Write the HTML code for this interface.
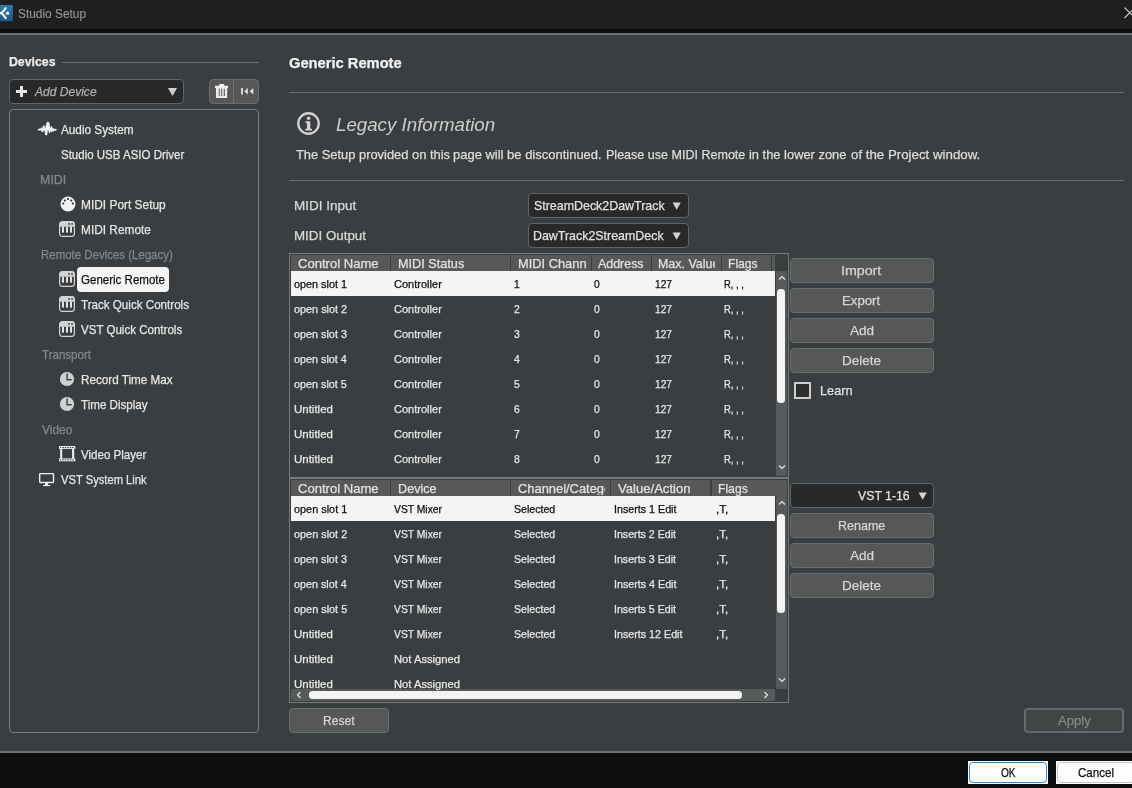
<!DOCTYPE html>
<html><head><meta charset="utf-8"><title>Studio Setup</title>
<style>
html,body{margin:0;padding:0;overflow:hidden;}
body{width:1132px;height:788px;position:relative;overflow:hidden;background:#3b3e40;font-family:"Liberation Sans", sans-serif;}
.b{position:absolute;box-sizing:border-box;}
.t{position:absolute;white-space:nowrap;display:block;transform-origin:0 0;-webkit-text-stroke:0.25px;}
#tx{position:absolute;left:0;top:0;width:1132px;height:788px;will-change:transform;}
svg{position:absolute;overflow:visible;}
#root{position:absolute;left:0;top:0;width:1132px;height:788px;overflow:hidden;}
</style></head><body><div id="root">
<div class="b" style="left:0px;top:0px;width:1132px;height:29px;background:#1f1f1f;"></div>
<div class="b" style="left:0px;top:29px;width:1132px;height:4px;background:#0c0e0d;"></div>
<div class="b" style="left:0px;top:33px;width:1132px;height:2px;background:#6e7172;"></div>
<svg style="left:0;top:4.75px" width="13" height="16.2" viewBox="0 0 13 16.2"><defs><linearGradient id="ig" x1="0" y1="0" x2="0" y2="1"><stop offset="0" stop-color="#2e7bb6"/><stop offset="1" stop-color="#1d5888"/></linearGradient></defs><rect x="0" y="0" width="12.9" height="16.2" fill="url(#ig)"/><path d="M-0.5 8.15 H1.6 M1.2 8.15 Q4.2 6.2 6.1 2.6 M1.2 8.15 Q4.2 10.1 6.1 13.7" stroke="#f4f8fc" stroke-width="2.2" fill="none" stroke-linecap="butt"/><circle cx="7.6" cy="8.15" r="1.65" fill="#eef6fc"/></svg>
<svg style="left:1124px;top:7px" width="10" height="12" viewBox="0 0 10 12"><path d="M0.5 0.5 L11 11 M0.5 11 L11 0.5" stroke="#c8c8c8" stroke-width="1.1" fill="none"/></svg>
<div class="b" style="left:0px;top:751px;width:1132px;height:2px;background:#6e7172;"></div>
<div class="b" style="left:0px;top:753px;width:1132px;height:35px;background:#0d0f0e;"></div>
<div class="b" style="left:968px;top:761px;width:80px;height:23px;background:#ffffff;"></div>
<div class="b" style="left:969px;top:762px;width:78px;height:21px;background:#fdfdfd;border:1.3px solid #3585cb;border-radius:4px;"></div>
<div class="b" style="left:1056px;top:761px;width:80px;height:23px;background:#ffffff;"></div>
<div class="b" style="left:1057px;top:762px;width:78px;height:21px;background:#fdfdfd;border:1px solid #c4c4c4;border-radius:4px;"></div>
<div class="b" style="left:62px;top:62px;width:197px;height:1px;background:#6b6e6f;"></div>
<div class="b" style="left:9px;top:79px;width:175px;height:25px;background:#28292a;border:1px solid #626566;border-radius:4px;"></div>
<svg style="left:16px;top:86px" width="11" height="11" viewBox="0 0 11 11"><path d="M4 0 H7 V4 H11 V7 H7 V11 H4 V7 H0 V4 H4 Z" fill="#e8e8e8"/></svg>
<svg style="left:167.5px;top:88px" width="9" height="8" viewBox="0 0 9 8"><path d="M0 0 H9 L4.5 8 Z" fill="#cfcfcf"/></svg>
<div class="b" style="left:209px;top:79px;width:50px;height:25px;background:#565858;border:1px solid #6a6d6e;border-radius:4px;"></div>
<div class="b" style="left:233px;top:80px;width:1px;height:23px;background:#6f7273;"></div>
<svg style="left:214.9px;top:83.9px" width="13.2" height="14.1" viewBox="0 0 13.2 14.1"><path d="M4.3 0 H9.2 V1.7 H13.1 V3.9 H0 V1.7 H4.3 Z" fill="#ededed"/><path d="M0.9 3.9 H12.3 L12.1 14.0 H1.1 Z M3.75 4.8 V12.1 H4.75 V4.8 Z M6.2 4.8 V12.1 H7.25 V4.8 Z M8.75 4.8 V12.1 H9.85 V4.8 Z" fill="#ededed" fill-rule="evenodd"/></svg>
<svg style="left:241px;top:88.2px" width="12.4" height="6.6" viewBox="0 0 12.4 6.6"><path d="M0.1 0 H1.9 V6.6 H0.1 Z M6.8 0 V6.6 L3.4 3.3 Z M12.3 0 V6.6 L8.9 3.3 Z" fill="#e6e6e6"/></svg>
<div class="b" style="left:9px;top:109px;width:250px;height:624px;border:1px solid #7a7d7e;border-radius:4px;"></div>
<div class="b" style="left:77px;top:267px;width:92px;height:25px;background:#f5f5f5;border-radius:4px;"></div>
<svg style="left:37.9px;top:121.9px" width="18.4" height="13.1" viewBox="0 0 18.4 13.1"><path d="M0.00 7.10 L2.31 6.77 L2.97 5.61 L3.80 6.77 L5.12 3.96 L5.94 3.47 L6.77 3.96 L7.26 6.93 L8.75 0.66 L9.41 0.00 L10.56 0.00 L11.22 1.32 L12.38 6.27 L13.20 4.46 L13.86 4.46 L14.69 6.77 L15.51 6.44 L16.50 7.10 L18.32 7.10 L18.32 8.25 L16.83 8.42 L15.68 9.24 L14.85 9.57 L14.36 8.58 L13.86 9.90 L13.04 9.90 L12.54 8.58 L12.05 10.89 L11.22 11.06 L10.56 8.58 L9.57 8.58 L9.08 13.04 L7.26 13.04 L6.77 8.58 L5.61 8.58 L4.95 10.07 L3.96 10.07 L3.47 8.58 L2.31 8.25 L0.00 8.25 Z" fill="#f4f4f4" stroke="#f4f4f4" stroke-width="0.35" stroke-linejoin="round"/></svg>
<svg style="left:59.8px;top:196.1px" width="16" height="16" viewBox="-8 -8 16 16"><circle cx="0" cy="0" r="7.5" fill="#f2f2f2"/><circle cx="-4.7" cy="-0.6" r="1.0" fill="#222"/><circle cx="-3.2" cy="-3.6" r="1.0" fill="#222"/><circle cx="0" cy="-4.9" r="1.0" fill="#222"/><circle cx="3.3" cy="-3.6" r="1.0" fill="#222"/><circle cx="4.9" cy="-0.6" r="1.0" fill="#222"/></svg>
<svg style="left:59px;top:221px" width="16" height="16" viewBox="0 0 16 16"><rect x="0.6" y="0.6" width="14.8" height="14.8" rx="2.8" fill="none" stroke="#d2d3d3" stroke-width="1.2"/><path d="M0.6 5.7 V3.2 Q0.6 0.6 3.2 0.6 H12.8 Q15.4 0.6 15.4 3.2 V5.7 Z" fill="#d2d3d3"/><rect x="9.2" y="2.1" width="1.7" height="1.7" fill="#4a4d4e"/><rect x="12.2" y="2.1" width="1.7" height="1.7" fill="#4a4d4e"/><rect x="3.0" y="5.6" width="2.0" height="6.0" fill="#e4e4e4"/><rect x="7.0" y="5.6" width="2.0" height="6.0" fill="#e4e4e4"/><rect x="11.0" y="5.6" width="2.0" height="6.0" fill="#e4e4e4"/></svg>
<svg style="left:59px;top:271px" width="16" height="16" viewBox="0 0 16 16"><rect x="0.6" y="0.6" width="14.8" height="14.8" rx="2.8" fill="none" stroke="#d2d3d3" stroke-width="1.2"/><path d="M0.6 5.7 V3.2 Q0.6 0.6 3.2 0.6 H12.8 Q15.4 0.6 15.4 3.2 V5.7 Z" fill="#d2d3d3"/><rect x="9.2" y="2.1" width="1.7" height="1.7" fill="#4a4d4e"/><rect x="12.2" y="2.1" width="1.7" height="1.7" fill="#4a4d4e"/><rect x="3.0" y="5.6" width="2.0" height="6.0" fill="#e4e4e4"/><rect x="7.0" y="5.6" width="2.0" height="6.0" fill="#e4e4e4"/><rect x="11.0" y="5.6" width="2.0" height="6.0" fill="#e4e4e4"/></svg>
<svg style="left:59px;top:296px" width="16" height="16" viewBox="0 0 16 16"><rect x="0.6" y="0.6" width="14.8" height="14.8" rx="2.8" fill="none" stroke="#d2d3d3" stroke-width="1.2"/><path d="M0.6 5.7 V3.2 Q0.6 0.6 3.2 0.6 H12.8 Q15.4 0.6 15.4 3.2 V5.7 Z" fill="#d2d3d3"/><rect x="9.2" y="2.1" width="1.7" height="1.7" fill="#4a4d4e"/><rect x="12.2" y="2.1" width="1.7" height="1.7" fill="#4a4d4e"/><rect x="3.0" y="5.6" width="2.0" height="6.0" fill="#e4e4e4"/><rect x="7.0" y="5.6" width="2.0" height="6.0" fill="#e4e4e4"/><rect x="11.0" y="5.6" width="2.0" height="6.0" fill="#e4e4e4"/></svg>
<svg style="left:59px;top:321px" width="16" height="16" viewBox="0 0 16 16"><rect x="0.6" y="0.6" width="14.8" height="14.8" rx="2.8" fill="none" stroke="#d2d3d3" stroke-width="1.2"/><path d="M0.6 5.7 V3.2 Q0.6 0.6 3.2 0.6 H12.8 Q15.4 0.6 15.4 3.2 V5.7 Z" fill="#d2d3d3"/><rect x="9.2" y="2.1" width="1.7" height="1.7" fill="#4a4d4e"/><rect x="12.2" y="2.1" width="1.7" height="1.7" fill="#4a4d4e"/><rect x="3.0" y="5.6" width="2.0" height="6.0" fill="#e4e4e4"/><rect x="7.0" y="5.6" width="2.0" height="6.0" fill="#e4e4e4"/><rect x="11.0" y="5.6" width="2.0" height="6.0" fill="#e4e4e4"/></svg>
<svg style="left:58.900000000000006px;top:370.8px" width="16" height="16" viewBox="-8 -8 16 16"><circle cx="0" cy="0" r="7.1" fill="#cfd1d1"/><path d="M0.1 -5.6 V0.8 H4.6" stroke="#3a3d3f" stroke-width="1.4" fill="none"/></svg>
<svg style="left:58.900000000000006px;top:396.2px" width="16" height="16" viewBox="-8 -8 16 16"><circle cx="0" cy="0" r="7.1" fill="#cfd1d1"/><path d="M0.1 -5.6 V0.8 H4.6" stroke="#3a3d3f" stroke-width="1.4" fill="none"/></svg>
<svg style="left:58.9px;top:445.8px" width="16.3" height="15.3" viewBox="0 0 16.3 15.3"><rect x="0" y="0" width="16.3" height="2.9" fill="#efefef"/><rect x="0" y="12.4" width="16.3" height="2.9" fill="#efefef"/><rect x="1.15" y="2" width="2.0" height="11" fill="#efefef"/><rect x="13.1" y="2" width="2.1" height="11" fill="#efefef"/><rect x="3.35" y="0.95" width="1.5" height="1.05" fill="#3b3e40"/><rect x="3.35" y="13.3" width="1.5" height="1.05" fill="#3b3e40"/><rect x="5.85" y="0.95" width="1.5" height="1.05" fill="#3b3e40"/><rect x="5.85" y="13.3" width="1.5" height="1.05" fill="#3b3e40"/><rect x="8.35" y="0.95" width="1.5" height="1.05" fill="#3b3e40"/><rect x="8.35" y="13.3" width="1.5" height="1.05" fill="#3b3e40"/><rect x="10.85" y="0.95" width="1.5" height="1.05" fill="#3b3e40"/><rect x="10.85" y="13.3" width="1.5" height="1.05" fill="#3b3e40"/><rect x="13.25" y="0.95" width="1.5" height="1.05" fill="#3b3e40"/><rect x="13.25" y="13.3" width="1.5" height="1.05" fill="#3b3e40"/><rect x="1.0" y="0.95" width="1.1" height="1.05" fill="#3b3e40"/><rect x="1.0" y="13.3" width="1.1" height="1.05" fill="#3b3e40"/></svg>
<svg style="left:38.9px;top:472.85px" width="15.2" height="13.2" viewBox="0 0 15.2 13.2"><rect x="0.68" y="0.68" width="13.84" height="8.8" rx="0.6" fill="none" stroke="#efefef" stroke-width="1.36"/><rect x="6.0" y="10.0" width="2.95" height="2.3" fill="#efefef"/><rect x="4.0" y="12.0" width="7.1" height="1.15" fill="#efefef"/></svg>
<div class="b" style="left:289px;top:92px;width:835px;height:1px;background:#6b6e6f;"></div>
<svg style="left:295.8px;top:111.3px" width="25" height="25" viewBox="-12.5 -12.5 25 25"><circle cx="0" cy="0" r="10.25" fill="none" stroke="#d2d2d2" stroke-width="2.3"/><circle cx="0.1" cy="-5.3" r="1.75" fill="#d6d6d6"/><path d="M-3.1 -2.3 H1.8 V5.2 H3.5 V6.9 H-3.2 V5.2 H-1.6 V-0.7 H-3.1 Z" fill="#d6d6d6"/></svg>
<div class="b" style="left:289px;top:180px;width:835px;height:1px;background:#6b6e6f;"></div>
<div class="b" style="left:528px;top:193px;width:161px;height:25px;background:#28292a;border:1px solid #626566;border-radius:4px;"></div>
<svg style="left:672px;top:202px" width="9" height="8" viewBox="0 0 9 8"><path d="M0.6 0.4 H8.8 L4.7 7.8 Z" fill="#d4d4d4"/></svg>
<div class="b" style="left:528px;top:223px;width:161px;height:25px;background:#28292a;border:1px solid #626566;border-radius:4px;"></div>
<svg style="left:672px;top:232px" width="9" height="8" viewBox="0 0 9 8"><path d="M0.6 0.4 H8.8 L4.7 7.8 Z" fill="#d4d4d4"/></svg>
<div class="b" style="left:289px;top:253px;width:500px;height:225px;border:1px solid #777a7b;"></div>
<div class="b" style="left:776px;top:271px;width:11px;height:205px;background:#575a5b;border-radius:2px;"></div>
<div class="b" style="left:291px;top:255px;width:98.6px;height:16px;background:#575959;"></div>
<div class="b" style="left:391px;top:255px;width:118.6px;height:16px;background:#575959;"></div>
<div class="b" style="left:511px;top:255px;width:79.6px;height:16px;background:#575959;"></div>
<div class="b" style="left:592px;top:255px;width:58.6px;height:16px;background:#575959;"></div>
<div class="b" style="left:652px;top:255px;width:68.6px;height:16px;background:#575959;"></div>
<div class="b" style="left:722px;top:255px;width:48.6px;height:16px;background:#575959;"></div>
<div class="b" style="left:772px;top:255px;width:2.6px;height:16px;background:#575959;"></div>
<div class="b" style="left:291px;top:271px;width:484px;height:25px;background:#f4f4f4;"></div>
<svg style="left:776.5px;top:273px" width="10" height="10" viewBox="-5 -5 10 10"><path d="M-3 1.5 L0 -1.5 L3 1.5" stroke="#e6e6e6" stroke-width="1.2" fill="none"/></svg>
<div class="b" style="left:777px;top:289px;width:8px;height:113.5px;background:#f4f4f4;border-radius:3.5px;"></div>
<svg style="left:776.5px;top:462px" width="10" height="10" viewBox="-5 -5 10 10"><path d="M-3 -1.5 L0 1.5 L3 -1.5" stroke="#e6e6e6" stroke-width="1.2" fill="none"/></svg>
<div class="b" style="left:289px;top:478px;width:500px;height:225px;border:1px solid #777a7b;"></div>
<div class="b" style="left:291px;top:480px;width:98.6px;height:16px;background:#575959;"></div>
<div class="b" style="left:391px;top:480px;width:118.6px;height:16px;background:#575959;"></div>
<div class="b" style="left:511px;top:480px;width:98.6px;height:16px;background:#575959;"></div>
<div class="b" style="left:611px;top:480px;width:99.1px;height:16px;background:#575959;"></div>
<div class="b" style="left:711.5px;top:480px;width:75.6px;height:16px;background:#575959;"></div>
<div class="b" style="left:291px;top:496px;width:484px;height:25px;background:#f4f4f4;"></div>
<div class="b" style="left:776px;top:496px;width:11px;height:193px;background:#575a5b;border-radius:2px;"></div>
<svg style="left:776.5px;top:498px" width="10" height="10" viewBox="-5 -5 10 10"><path d="M-3 1.5 L0 -1.5 L3 1.5" stroke="#e6e6e6" stroke-width="1.2" fill="none"/></svg>
<div class="b" style="left:777px;top:514px;width:8px;height:99px;background:#f4f4f4;border-radius:3.5px;"></div>
<svg style="left:776.5px;top:675px" width="10" height="10" viewBox="-5 -5 10 10"><path d="M-3 -1.5 L0 1.5 L3 -1.5" stroke="#e6e6e6" stroke-width="1.2" fill="none"/></svg>
<div class="b" style="left:291px;top:689px;width:484px;height:12px;background:#575a5b;border-radius:2px;"></div>
<div class="b" style="left:309px;top:691px;width:433px;height:8px;background:#f4f4f4;border-radius:3.5px;"></div>
<svg style="left:293.5px;top:690px" width="10" height="10" viewBox="-5 -5 10 10"><path d="M1.5 -3 L-1.5 0 L1.5 3" stroke="#e6e6e6" stroke-width="1.2" fill="none"/></svg>
<svg style="left:761px;top:690px" width="10" height="10" viewBox="-5 -5 10 10"><path d="M-1.5 -3 L1.5 0 L-1.5 3" stroke="#e6e6e6" stroke-width="1.2" fill="none"/></svg>
<div class="b" style="left:790px;top:258px;width:144px;height:25px;background:#565858;border:1px solid #6a6d6e;border-radius:4px;"></div>
<div class="b" style="left:790px;top:288px;width:144px;height:25px;background:#565858;border:1px solid #6a6d6e;border-radius:4px;"></div>
<div class="b" style="left:790px;top:318px;width:144px;height:25px;background:#565858;border:1px solid #6a6d6e;border-radius:4px;"></div>
<div class="b" style="left:790px;top:348px;width:144px;height:25px;background:#565858;border:1px solid #6a6d6e;border-radius:4px;"></div>
<div class="b" style="left:794px;top:382px;width:17px;height:17px;background:#2c2e2f;border:2px solid #cdcdcd;"></div>
<div class="b" style="left:790px;top:483px;width:144px;height:25px;background:#28292a;border:1px solid #626566;border-radius:4px;"></div>
<svg style="left:917.7px;top:492px" width="9" height="8" viewBox="0 0 9 8"><path d="M0.6 0.4 H8.8 L4.7 7.8 Z" fill="#d4d4d4"/></svg>
<div class="b" style="left:790px;top:513px;width:144px;height:25px;background:#565858;border:1px solid #6a6d6e;border-radius:4px;"></div>
<div class="b" style="left:790px;top:543px;width:144px;height:25px;background:#565858;border:1px solid #6a6d6e;border-radius:4px;"></div>
<div class="b" style="left:790px;top:573px;width:144px;height:25px;background:#565858;border:1px solid #6a6d6e;border-radius:4px;"></div>
<div class="b" style="left:289px;top:708px;width:100px;height:25px;background:#565858;border:1px solid #6a6d6e;border-radius:4px;"></div>
<div class="b" style="left:1024px;top:708px;width:100px;height:25px;background:#424546;border:2px solid #676a6b;border-radius:4px;"></div>
<div id="tx">
<span class="t m" style="top:7.00px;font-size:13.1px;line-height:13.1px;height:13.1px;color:#989898;-webkit-text-stroke:0.1px;left:18.00px;transform:scaleX(0.9072);">Studio Setup</span>
<span class="t m" style="top:767.00px;font-size:12.1px;line-height:12.1px;height:12.1px;color:#111;left:1001.00px;transform:scaleX(0.8368);">OK</span>
<span class="t m" style="top:767.00px;font-size:12.1px;line-height:12.1px;height:12.1px;color:#111;left:1078.00px;transform:scaleX(0.9574);">Cancel</span>
<span class="t m" style="top:55.00px;font-size:13.4px;line-height:13.4px;height:13.4px;color:#ececec;font-weight:700;left:9.00px;transform:scaleX(0.9177);">Devices</span>
<span class="t m" style="top:85.00px;font-size:13.1px;line-height:13.1px;height:13.1px;color:#aeb0b1;font-style:italic;left:35.00px;transform:scaleX(0.9198);">Add Device</span>
<span class="t m" style="top:123.00px;font-size:13.1px;line-height:13.1px;height:13.1px;color:#e6e6e6;left:61.00px;transform:scaleX(0.8974);">Audio System</span>
<span class="t m" style="top:148.00px;font-size:13.1px;line-height:13.1px;height:13.1px;color:#e6e6e6;left:61.00px;transform:scaleX(0.8781);">Studio USB ASIO Driver</span>
<span class="t m" style="top:173.00px;font-size:13.1px;line-height:13.1px;height:13.1px;color:#858889;left:40.00px;transform:scaleX(0.9530);">MIDI</span>
<span class="t m" style="top:198.00px;font-size:13.1px;line-height:13.1px;height:13.1px;color:#e6e6e6;left:81.00px;transform:scaleX(0.9096);">MIDI Port Setup</span>
<span class="t m" style="top:223.00px;font-size:13.1px;line-height:13.1px;height:13.1px;color:#e6e6e6;left:81.00px;transform:scaleX(0.9067);">MIDI Remote</span>
<span class="t m" style="top:248.00px;font-size:13.1px;line-height:13.1px;height:13.1px;color:#858889;left:41.00px;transform:scaleX(0.8745);">Remote Devices (Legacy)</span>
<span class="t m" style="top:273.00px;font-size:13.1px;line-height:13.1px;height:13.1px;color:#101010;left:81.00px;transform:scaleX(0.8810);">Generic Remote</span>
<span class="t m" style="top:298.00px;font-size:13.1px;line-height:13.1px;height:13.1px;color:#e6e6e6;left:81.00px;transform:scaleX(0.8871);">Track Quick Controls</span>
<span class="t m" style="top:323.00px;font-size:13.1px;line-height:13.1px;height:13.1px;color:#e6e6e6;left:81.00px;transform:scaleX(0.8820);">VST Quick Controls</span>
<span class="t m" style="top:348.00px;font-size:13.1px;line-height:13.1px;height:13.1px;color:#858889;left:42.00px;transform:scaleX(0.8821);">Transport</span>
<span class="t m" style="top:373.00px;font-size:13.1px;line-height:13.1px;height:13.1px;color:#e6e6e6;left:81.00px;transform:scaleX(0.8939);">Record Time Max</span>
<span class="t m" style="top:398.00px;font-size:13.1px;line-height:13.1px;height:13.1px;color:#e6e6e6;left:81.00px;transform:scaleX(0.8851);">Time Display</span>
<span class="t m" style="top:423.00px;font-size:13.1px;line-height:13.1px;height:13.1px;color:#858889;left:42.00px;transform:scaleX(0.9147);">Video</span>
<span class="t m" style="top:448.00px;font-size:13.1px;line-height:13.1px;height:13.1px;color:#e6e6e6;left:81.00px;transform:scaleX(0.8816);">Video Player</span>
<span class="t m" style="top:473.00px;font-size:13.1px;line-height:13.1px;height:13.1px;color:#e6e6e6;left:61.00px;transform:scaleX(0.8550);">VST System Link</span>
<span class="t m" style="top:56.00px;font-size:14.6px;line-height:14.6px;height:14.6px;color:#f2f2f2;font-weight:700;left:289.00px;transform:scaleX(1.0067);">Generic Remote</span>
<span class="t m" style="top:117.00px;font-size:17.6px;line-height:17.6px;height:17.6px;color:#cdcdcd;font-style:italic;-webkit-text-stroke:0px;left:336.00px;transform:scaleX(1.0635);">Legacy Information</span>
<span class="t m" style="top:148.00px;font-size:13.1px;line-height:13.1px;height:13.1px;color:#dedede;left:296.00px;transform:scaleX(0.9836);">The Setup provided on this</span>
<span class="t m" style="top:148.00px;font-size:13.1px;line-height:13.1px;height:13.1px;color:#dedede;left:453.00px;transform:scaleX(0.9913);">page will be discontinued.</span>
<span class="t m" style="top:148.00px;font-size:13.1px;line-height:13.1px;height:13.1px;color:#dedede;left:606.00px;transform:scaleX(0.9572);">Please use MIDI Remote</span>
<span class="t m" style="top:148.00px;font-size:13.1px;line-height:13.1px;height:13.1px;color:#dedede;left:749.00px;transform:scaleX(0.9844);">in the lower zone</span>
<span class="t m" style="top:148.00px;font-size:13.1px;line-height:13.1px;height:13.1px;color:#dedede;left:851.00px;transform:scaleX(1.0145);">of the Project window.</span>
<span class="t m" style="top:199.00px;font-size:13.1px;line-height:13.1px;height:13.1px;color:#d9d9d9;left:294.00px;transform:scaleX(1.0316);">MIDI Input</span>
<span class="t m" style="top:229.00px;font-size:13.1px;line-height:13.1px;height:13.1px;color:#d9d9d9;left:294.00px;transform:scaleX(1.0195);">MIDI Output</span>
<span class="t m" style="top:199.00px;font-size:13.1px;line-height:13.1px;height:13.1px;color:#e2e2e2;left:534.00px;transform:scaleX(0.9481);">StreamDeck2DawTrack</span>
<span class="t m" style="top:229.00px;font-size:13.1px;line-height:13.1px;height:13.1px;color:#e2e2e2;left:533.00px;transform:scaleX(0.9483);">DawTrack2StreamDeck</span>
<span class="t m" style="top:257.00px;font-size:13.1px;line-height:13.1px;height:13.1px;color:#e2e2e2;left:298.00px;transform:scaleX(0.9982);">Control Name</span>
<span class="t m" style="top:257.00px;font-size:13.1px;line-height:13.1px;height:13.1px;color:#e2e2e2;left:398.00px;transform:scaleX(0.9683);">MIDI Status</span>
<span class="t m" style="top:257.00px;font-size:13.1px;line-height:13.1px;height:13.1px;color:#e2e2e2;left:518.00px;transform:scaleX(0.9808);">MIDI Chann</span>
<span class="t m" style="top:257.00px;font-size:13.1px;line-height:13.1px;height:13.1px;color:#e2e2e2;left:598.00px;transform:scaleX(0.9488);">Address</span>
<span class="t" style="top:257.00px;font-size:13.1px;line-height:13.1px;height:13.1px;color:#e2e2e2;left:658.00px;width:56.7px;overflow:hidden;"><span class="t m" style="left:0;top:0;transform:scaleX(0.9505);">Max. Value</span></span>
<span class="t m" style="top:257.00px;font-size:13.1px;line-height:13.1px;height:13.1px;color:#e2e2e2;left:728.00px;transform:scaleX(0.9271);">Flags</span>
<span class="t m" style="top:279.00px;font-size:11.2px;line-height:11.2px;height:11.2px;color:#0c0c0c;left:294.00px;transform:scaleX(0.9685);">open slot 1</span>
<span class="t m" style="top:279.00px;font-size:11.2px;line-height:11.2px;height:11.2px;color:#0c0c0c;left:394.00px;transform:scaleX(0.9857);">Controller</span>
<span class="t m" style="top:279.00px;font-size:11.2px;line-height:11.2px;height:11.2px;color:#0c0c0c;left:514.00px;transform:scaleX(0.9300);">1</span>
<span class="t m" style="top:279.00px;font-size:11.2px;line-height:11.2px;height:11.2px;color:#0c0c0c;left:594.00px;transform:scaleX(0.9300);">0</span>
<span class="t m" style="top:279.00px;font-size:11.2px;line-height:11.2px;height:11.2px;color:#0c0c0c;left:655.00px;transform:scaleX(0.9112);">127</span>
<span class="t m" style="top:279.00px;font-size:11.2px;line-height:11.2px;height:11.2px;color:#0c0c0c;left:724.00px;transform:scaleX(0.8386);">R, , ,</span>
<span class="t m" style="top:304.00px;font-size:11.2px;line-height:11.2px;height:11.2px;color:#e8e8e8;left:294.00px;transform:scaleX(0.9693);">open slot 2</span>
<span class="t m" style="top:304.00px;font-size:11.2px;line-height:11.2px;height:11.2px;color:#e8e8e8;left:394.00px;transform:scaleX(0.9857);">Controller</span>
<span class="t m" style="top:304.00px;font-size:11.2px;line-height:11.2px;height:11.2px;color:#e8e8e8;left:514.00px;transform:scaleX(0.9300);">2</span>
<span class="t m" style="top:304.00px;font-size:11.2px;line-height:11.2px;height:11.2px;color:#e8e8e8;left:594.00px;transform:scaleX(0.9300);">0</span>
<span class="t m" style="top:304.00px;font-size:11.2px;line-height:11.2px;height:11.2px;color:#e8e8e8;left:655.00px;transform:scaleX(0.9112);">127</span>
<span class="t m" style="top:304.00px;font-size:11.2px;line-height:11.2px;height:11.2px;color:#e8e8e8;left:724.00px;transform:scaleX(0.8386);">R, , ,</span>
<span class="t m" style="top:329.00px;font-size:11.2px;line-height:11.2px;height:11.2px;color:#e8e8e8;left:294.00px;transform:scaleX(0.9664);">open slot 3</span>
<span class="t m" style="top:329.00px;font-size:11.2px;line-height:11.2px;height:11.2px;color:#e8e8e8;left:394.00px;transform:scaleX(0.9857);">Controller</span>
<span class="t m" style="top:329.00px;font-size:11.2px;line-height:11.2px;height:11.2px;color:#e8e8e8;left:514.00px;transform:scaleX(0.9300);">3</span>
<span class="t m" style="top:329.00px;font-size:11.2px;line-height:11.2px;height:11.2px;color:#e8e8e8;left:594.00px;transform:scaleX(0.9300);">0</span>
<span class="t m" style="top:329.00px;font-size:11.2px;line-height:11.2px;height:11.2px;color:#e8e8e8;left:655.00px;transform:scaleX(0.9112);">127</span>
<span class="t m" style="top:329.00px;font-size:11.2px;line-height:11.2px;height:11.2px;color:#e8e8e8;left:724.00px;transform:scaleX(0.8386);">R, , ,</span>
<span class="t m" style="top:354.00px;font-size:11.2px;line-height:11.2px;height:11.2px;color:#e8e8e8;left:294.00px;transform:scaleX(0.9662);">open slot 4</span>
<span class="t m" style="top:354.00px;font-size:11.2px;line-height:11.2px;height:11.2px;color:#e8e8e8;left:394.00px;transform:scaleX(0.9857);">Controller</span>
<span class="t m" style="top:354.00px;font-size:11.2px;line-height:11.2px;height:11.2px;color:#e8e8e8;left:514.00px;transform:scaleX(0.9300);">4</span>
<span class="t m" style="top:354.00px;font-size:11.2px;line-height:11.2px;height:11.2px;color:#e8e8e8;left:594.00px;transform:scaleX(0.9300);">0</span>
<span class="t m" style="top:354.00px;font-size:11.2px;line-height:11.2px;height:11.2px;color:#e8e8e8;left:655.00px;transform:scaleX(0.9112);">127</span>
<span class="t m" style="top:354.00px;font-size:11.2px;line-height:11.2px;height:11.2px;color:#e8e8e8;left:724.00px;transform:scaleX(0.8386);">R, , ,</span>
<span class="t m" style="top:379.00px;font-size:11.2px;line-height:11.2px;height:11.2px;color:#e8e8e8;left:294.00px;transform:scaleX(0.9661);">open slot 5</span>
<span class="t m" style="top:379.00px;font-size:11.2px;line-height:11.2px;height:11.2px;color:#e8e8e8;left:394.00px;transform:scaleX(0.9857);">Controller</span>
<span class="t m" style="top:379.00px;font-size:11.2px;line-height:11.2px;height:11.2px;color:#e8e8e8;left:514.00px;transform:scaleX(0.9300);">5</span>
<span class="t m" style="top:379.00px;font-size:11.2px;line-height:11.2px;height:11.2px;color:#e8e8e8;left:594.00px;transform:scaleX(0.9300);">0</span>
<span class="t m" style="top:379.00px;font-size:11.2px;line-height:11.2px;height:11.2px;color:#e8e8e8;left:655.00px;transform:scaleX(0.9112);">127</span>
<span class="t m" style="top:379.00px;font-size:11.2px;line-height:11.2px;height:11.2px;color:#e8e8e8;left:724.00px;transform:scaleX(0.8386);">R, , ,</span>
<span class="t m" style="top:404.00px;font-size:11.2px;line-height:11.2px;height:11.2px;color:#e8e8e8;left:294.00px;transform:scaleX(1.0260);">Untitled</span>
<span class="t m" style="top:404.00px;font-size:11.2px;line-height:11.2px;height:11.2px;color:#e8e8e8;left:394.00px;transform:scaleX(0.9857);">Controller</span>
<span class="t m" style="top:404.00px;font-size:11.2px;line-height:11.2px;height:11.2px;color:#e8e8e8;left:514.00px;transform:scaleX(0.9300);">6</span>
<span class="t m" style="top:404.00px;font-size:11.2px;line-height:11.2px;height:11.2px;color:#e8e8e8;left:594.00px;transform:scaleX(0.9300);">0</span>
<span class="t m" style="top:404.00px;font-size:11.2px;line-height:11.2px;height:11.2px;color:#e8e8e8;left:655.00px;transform:scaleX(0.9112);">127</span>
<span class="t m" style="top:404.00px;font-size:11.2px;line-height:11.2px;height:11.2px;color:#e8e8e8;left:724.00px;transform:scaleX(0.8386);">R, , ,</span>
<span class="t m" style="top:429.00px;font-size:11.2px;line-height:11.2px;height:11.2px;color:#e8e8e8;left:294.00px;transform:scaleX(1.0260);">Untitled</span>
<span class="t m" style="top:429.00px;font-size:11.2px;line-height:11.2px;height:11.2px;color:#e8e8e8;left:394.00px;transform:scaleX(0.9857);">Controller</span>
<span class="t m" style="top:429.00px;font-size:11.2px;line-height:11.2px;height:11.2px;color:#e8e8e8;left:514.00px;transform:scaleX(0.9300);">7</span>
<span class="t m" style="top:429.00px;font-size:11.2px;line-height:11.2px;height:11.2px;color:#e8e8e8;left:594.00px;transform:scaleX(0.9300);">0</span>
<span class="t m" style="top:429.00px;font-size:11.2px;line-height:11.2px;height:11.2px;color:#e8e8e8;left:655.00px;transform:scaleX(0.9112);">127</span>
<span class="t m" style="top:429.00px;font-size:11.2px;line-height:11.2px;height:11.2px;color:#e8e8e8;left:724.00px;transform:scaleX(0.8386);">R, , ,</span>
<span class="t m" style="top:454.00px;font-size:11.2px;line-height:11.2px;height:11.2px;color:#e8e8e8;left:294.00px;transform:scaleX(1.0260);">Untitled</span>
<span class="t m" style="top:454.00px;font-size:11.2px;line-height:11.2px;height:11.2px;color:#e8e8e8;left:394.00px;transform:scaleX(0.9857);">Controller</span>
<span class="t m" style="top:454.00px;font-size:11.2px;line-height:11.2px;height:11.2px;color:#e8e8e8;left:514.00px;transform:scaleX(0.9300);">8</span>
<span class="t m" style="top:454.00px;font-size:11.2px;line-height:11.2px;height:11.2px;color:#e8e8e8;left:594.00px;transform:scaleX(0.9300);">0</span>
<span class="t m" style="top:454.00px;font-size:11.2px;line-height:11.2px;height:11.2px;color:#e8e8e8;left:655.00px;transform:scaleX(0.9112);">127</span>
<span class="t m" style="top:454.00px;font-size:11.2px;line-height:11.2px;height:11.2px;color:#e8e8e8;left:724.00px;transform:scaleX(0.8386);">R, , ,</span>
<span class="t m" style="top:482.00px;font-size:13.1px;line-height:13.1px;height:13.1px;color:#e2e2e2;left:298.00px;transform:scaleX(0.9982);">Control Name</span>
<span class="t m" style="top:482.00px;font-size:13.1px;line-height:13.1px;height:13.1px;color:#e2e2e2;left:398.00px;transform:scaleX(0.9656);">Device</span>
<span class="t" style="top:482.00px;font-size:13.1px;line-height:13.1px;height:13.1px;color:#e2e2e2;left:518.00px;width:86.7px;overflow:hidden;"><span class="t m" style="left:0;top:0;transform:scaleX(0.9847);">Channel/Catego</span></span>
<span class="t m" style="top:482.00px;font-size:13.1px;line-height:13.1px;height:13.1px;color:#e2e2e2;left:618.00px;transform:scaleX(0.9992);">Value/Action</span>
<span class="t m" style="top:482.00px;font-size:13.1px;line-height:13.1px;height:13.1px;color:#e2e2e2;left:718.00px;transform:scaleX(0.9280);">Flags</span>
<span class="t m" style="top:504.00px;font-size:11.2px;line-height:11.2px;height:11.2px;color:#0c0c0c;left:294.00px;transform:scaleX(0.9729);">open slot 1</span>
<span class="t m" style="top:504.00px;font-size:11.2px;line-height:11.2px;height:11.2px;color:#0c0c0c;left:394.00px;transform:scaleX(0.9228);">VST Mixer</span>
<span class="t m" style="top:504.00px;font-size:11.2px;line-height:11.2px;height:11.2px;color:#0c0c0c;left:514.00px;transform:scaleX(0.9480);">Selected</span>
<span class="t m" style="top:504.00px;font-size:11.2px;line-height:11.2px;height:11.2px;color:#0c0c0c;left:614.00px;transform:scaleX(0.9564);">Inserts 1 Edit</span>
<span class="t m" style="top:504.00px;font-size:11.2px;line-height:11.2px;height:11.2px;color:#0c0c0c;left:716.00px;transform:scaleX(1.0467);">,T,</span>
<span class="t m" style="top:529.00px;font-size:11.2px;line-height:11.2px;height:11.2px;color:#e8e8e8;left:294.00px;transform:scaleX(0.9716);">open slot 2</span>
<span class="t m" style="top:529.00px;font-size:11.2px;line-height:11.2px;height:11.2px;color:#e8e8e8;left:394.00px;transform:scaleX(0.9228);">VST Mixer</span>
<span class="t m" style="top:529.00px;font-size:11.2px;line-height:11.2px;height:11.2px;color:#e8e8e8;left:514.00px;transform:scaleX(0.9448);">Selected</span>
<span class="t m" style="top:529.00px;font-size:11.2px;line-height:11.2px;height:11.2px;color:#e8e8e8;left:614.00px;transform:scaleX(0.9506);">Inserts 2 Edit</span>
<span class="t m" style="top:529.00px;font-size:11.2px;line-height:11.2px;height:11.2px;color:#e8e8e8;left:716.00px;transform:scaleX(1.0226);">,T,</span>
<span class="t m" style="top:554.00px;font-size:11.2px;line-height:11.2px;height:11.2px;color:#e8e8e8;left:294.00px;transform:scaleX(0.9664);">open slot 3</span>
<span class="t m" style="top:554.00px;font-size:11.2px;line-height:11.2px;height:11.2px;color:#e8e8e8;left:394.00px;transform:scaleX(0.9228);">VST Mixer</span>
<span class="t m" style="top:554.00px;font-size:11.2px;line-height:11.2px;height:11.2px;color:#e8e8e8;left:514.00px;transform:scaleX(0.9467);">Selected</span>
<span class="t m" style="top:554.00px;font-size:11.2px;line-height:11.2px;height:11.2px;color:#e8e8e8;left:614.00px;transform:scaleX(0.9504);">Inserts 3 Edit</span>
<span class="t m" style="top:554.00px;font-size:11.2px;line-height:11.2px;height:11.2px;color:#e8e8e8;left:716.00px;transform:scaleX(1.0271);">,T,</span>
<span class="t m" style="top:579.00px;font-size:11.2px;line-height:11.2px;height:11.2px;color:#e8e8e8;left:294.00px;transform:scaleX(0.9632);">open slot 4</span>
<span class="t m" style="top:579.00px;font-size:11.2px;line-height:11.2px;height:11.2px;color:#e8e8e8;left:394.00px;transform:scaleX(0.9228);">VST Mixer</span>
<span class="t m" style="top:579.00px;font-size:11.2px;line-height:11.2px;height:11.2px;color:#e8e8e8;left:514.00px;transform:scaleX(0.9480);">Selected</span>
<span class="t m" style="top:579.00px;font-size:11.2px;line-height:11.2px;height:11.2px;color:#e8e8e8;left:614.00px;transform:scaleX(0.9564);">Inserts 4 Edit</span>
<span class="t m" style="top:579.00px;font-size:11.2px;line-height:11.2px;height:11.2px;color:#e8e8e8;left:716.00px;transform:scaleX(1.0467);">,T,</span>
<span class="t m" style="top:604.00px;font-size:11.2px;line-height:11.2px;height:11.2px;color:#e8e8e8;left:294.00px;transform:scaleX(0.9715);">open slot 5</span>
<span class="t m" style="top:604.00px;font-size:11.2px;line-height:11.2px;height:11.2px;color:#e8e8e8;left:394.00px;transform:scaleX(0.9228);">VST Mixer</span>
<span class="t m" style="top:604.00px;font-size:11.2px;line-height:11.2px;height:11.2px;color:#e8e8e8;left:514.00px;transform:scaleX(0.9448);">Selected</span>
<span class="t m" style="top:604.00px;font-size:11.2px;line-height:11.2px;height:11.2px;color:#e8e8e8;left:614.00px;transform:scaleX(0.9506);">Inserts 5 Edit</span>
<span class="t m" style="top:604.00px;font-size:11.2px;line-height:11.2px;height:11.2px;color:#e8e8e8;left:716.00px;transform:scaleX(1.0226);">,T,</span>
<span class="t m" style="top:629.00px;font-size:11.2px;line-height:11.2px;height:11.2px;color:#e8e8e8;left:294.00px;transform:scaleX(1.0260);">Untitled</span>
<span class="t m" style="top:629.00px;font-size:11.2px;line-height:11.2px;height:11.2px;color:#e8e8e8;left:394.00px;transform:scaleX(0.9228);">VST Mixer</span>
<span class="t m" style="top:629.00px;font-size:11.2px;line-height:11.2px;height:11.2px;color:#e8e8e8;left:514.00px;transform:scaleX(0.9467);">Selected</span>
<span class="t m" style="top:629.00px;font-size:11.2px;line-height:11.2px;height:11.2px;color:#e8e8e8;left:614.00px;transform:scaleX(0.9572);">Inserts 12 Edit</span>
<span class="t m" style="top:629.00px;font-size:11.2px;line-height:11.2px;height:11.2px;color:#e8e8e8;left:716.00px;transform:scaleX(1.0271);">,T,</span>
<span class="t m" style="top:654.00px;font-size:11.2px;line-height:11.2px;height:11.2px;color:#e8e8e8;left:294.00px;transform:scaleX(1.0230);">Untitled</span>
<span class="t m" style="top:654.00px;font-size:11.2px;line-height:11.2px;height:11.2px;color:#e8e8e8;left:394.00px;transform:scaleX(1.0014);">Not Assigned</span>
<span class="t m" style="top:679.00px;font-size:11.2px;line-height:11.2px;height:11.2px;color:#e8e8e8;left:294.00px;transform:scaleX(1.0247);">Untitled</span>
<span class="t m" style="top:679.00px;font-size:11.2px;line-height:11.2px;height:11.2px;color:#e8e8e8;left:394.00px;transform:scaleX(1.0005);">Not Assigned</span>
<span class="t m" style="top:264.00px;font-size:13.1px;line-height:13.1px;height:13.1px;color:#d6d6d6;left:841.00px;transform:scaleX(1.0858);">Import</span>
<span class="t m" style="top:294.00px;font-size:13.1px;line-height:13.1px;height:13.1px;color:#d6d6d6;left:842.00px;transform:scaleX(1.0081);">Export</span>
<span class="t m" style="top:324.00px;font-size:13.1px;line-height:13.1px;height:13.1px;color:#d6d6d6;left:850.00px;transform:scaleX(1.0348);">Add</span>
<span class="t m" style="top:354.00px;font-size:13.1px;line-height:13.1px;height:13.1px;color:#d6d6d6;left:842.00px;transform:scaleX(1.0278);">Delete</span>
<span class="t m" style="top:384.00px;font-size:13.1px;line-height:13.1px;height:13.1px;color:#e2e2e2;left:820.00px;transform:scaleX(0.9718);">Learn</span>
<span class="t m" style="top:489.00px;font-size:13.1px;line-height:13.1px;height:13.1px;color:#e2e2e2;left:858.00px;transform:scaleX(0.9378);">VST 1-16</span>
<span class="t m" style="top:519.00px;font-size:13.1px;line-height:13.1px;height:13.1px;color:#d6d6d6;left:838.00px;transform:scaleX(0.9548);">Rename</span>
<span class="t m" style="top:549.00px;font-size:13.1px;line-height:13.1px;height:13.1px;color:#d6d6d6;left:850.00px;transform:scaleX(1.0355);">Add</span>
<span class="t m" style="top:579.00px;font-size:13.1px;line-height:13.1px;height:13.1px;color:#d6d6d6;left:842.00px;transform:scaleX(1.0288);">Delete</span>
<span class="t m" style="top:714.00px;font-size:13.1px;line-height:13.1px;height:13.1px;color:#d6d6d6;left:323.00px;transform:scaleX(0.9202);">Reset</span>
<span class="t m" style="top:714.00px;font-size:13.1px;line-height:13.1px;height:13.1px;color:#858889;left:1058.00px;transform:scaleX(0.9978);">Apply</span>
</div>
</div>
</body></html>
